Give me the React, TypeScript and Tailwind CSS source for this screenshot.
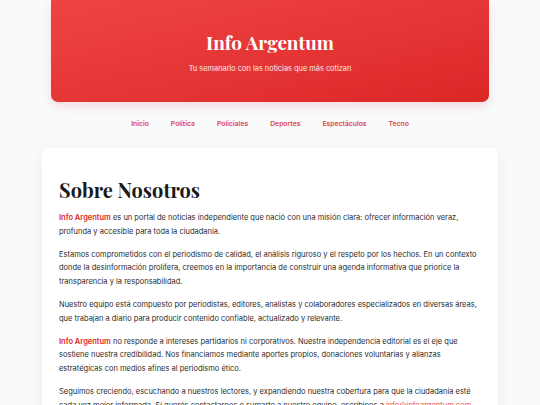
const navItems = ["Inicio", "Política", "Policiales", "Deportes", "Espectáculos", "Tecno"];

const serif = "font-['Playfair_Display','Liberation_Serif','DejaVu_Serif',serif]";

function Brand() {
  return <span className="font-semibold text-[#dc2626]">Info Argentum</span>;
}

export default function App() {
  return (
    <div className="min-h-screen bg-[#f8fafc] font-['Inter','Liberation_Sans',sans-serif]">
      <header className="mx-[51px] flex h-[102px] flex-col items-center justify-center rounded-b-[7px] bg-gradient-to-br from-[#ef4444] to-[#dc2626] pt-[6px] text-white shadow-[0_4px_10px_rgba(220,38,38,0.15)]">
        <h1 className={`${serif} text-[19px] font-bold leading-none`}>Info Argentum</h1>
        <p className="mt-[11px] text-[7.4px] text-white/90">Tu semanario con las noticias que más cotizan</p>
      </header>

      <nav className="flex justify-center gap-[22px] pt-[17px] pb-[19px]">
        {navItems.map((item) => (
          <a key={item} className="text-[6.8px] font-semibold leading-[10px] text-[#e04848]">
            {item}
          </a>
        ))}
      </nav>

      <main className="mx-[42px] rounded-[6px] bg-white px-[17px] pt-[28px] pb-[20px] shadow-[0_4px_16px_rgba(15,23,42,0.06)]">
        <h2 className={`${serif} text-[20px] font-bold leading-[28px] text-[#1a1a1a]`}>Sobre Nosotros</h2>
        <div className="mt-[7px] space-y-[9px] text-[7.5px] leading-[13.8px] text-[#2a2a2a]">
          <p>
            <Brand /> es un portal de noticias independiente que nació con una misión clara: ofrecer información veraz,
            profunda y accesible para toda la ciudadanía.
          </p>
          <p>
            Estamos comprometidos con el periodismo de calidad, el análisis riguroso y el respeto por los hechos. En un
            contexto donde la desinformación prolifera, creemos en la importancia de construir una agenda informativa que
            priorice la transparencia y la responsabilidad.
          </p>
          <p>
            Nuestro equipo está compuesto por periodistas, editores, analistas y colaboradores especializados en diversas
            áreas, que trabajan a diario para producir contenido confiable, actualizado y relevante.
          </p>
          <p>
            <Brand /> no responde a intereses partidarios ni corporativos. Nuestra independencia editorial es el eje que
            sostiene nuestra credibilidad. Nos financiamos mediante aportes propios, donaciones voluntarias y alianzas
            estratégicas con medios afines al periodismo ético.
          </p>
          <p>
            Seguimos creciendo, escuchando a nuestros lectores, y expandiendo nuestra cobertura para que la ciudadanía esté
            cada vez mejor informada. Si querés contactarnos o sumarte a nuestro equipo, escribinos a{" "}
            <a className="text-[#ef4444]">info@infoargentum.com</a>
          </p>
        </div>
      </main>
    </div>
  );
}
